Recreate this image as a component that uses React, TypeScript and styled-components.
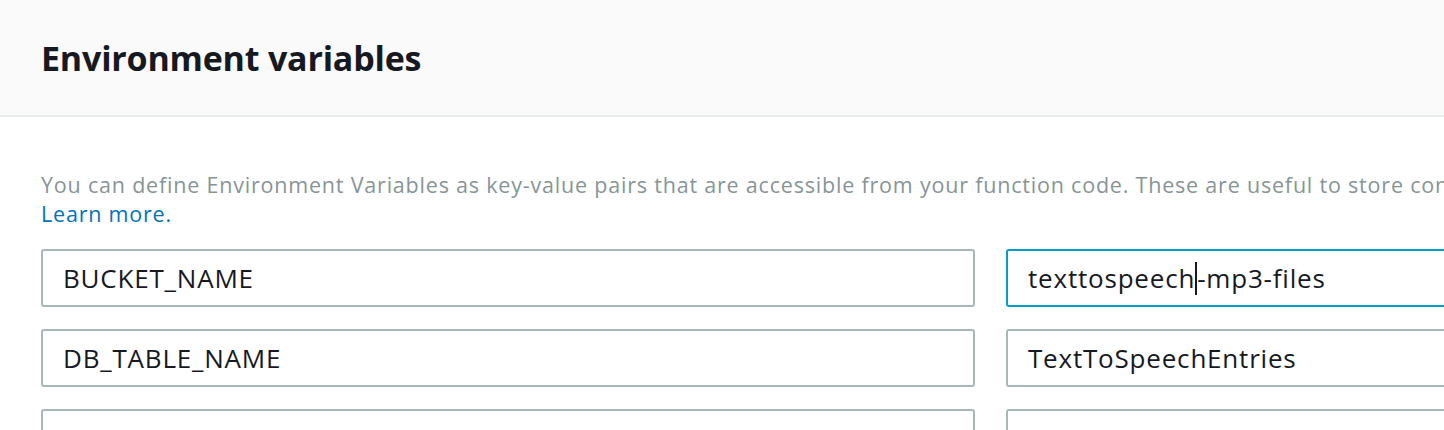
import React from 'react';
import styled, {createGlobalStyle} from 'styled-components';

const colors = {
    headerBackground: '#fafafa',
    divider: '#eaeded',
    text: '#16191f',
    muted: '#879596',
    link: '#0073bb',
    inputBorder: '#aab7b8',
    focus: '#00a1c9',
};

const GlobalStyle = createGlobalStyle`
  html, body {
    margin: 0;
    padding: 0;
    background: #fff;
    overflow: hidden;
  }
  body {
    font-family: "Open Sans", "Noto Sans", sans-serif;
    color: ${colors.text};
  }
`;

interface EnvVar {
    key: string
    value: string
    caretAt?: number
}

const variables: EnvVar[] = [
    {key: 'BUCKET_NAME', value: 'texttospeech-mp3-files', caretAt: 12},
    {key: 'DB_TABLE_NAME', value: 'TextToSpeechEntries'},
    {key: '', value: ''},
];

const ValueText: React.FC<{value: string, caretAt?: number}> = ({value, caretAt}) => {
    if (caretAt === undefined) return <>{value}</>;
    return (
        <>
            {value.slice(0, caretAt)}
            <Caret/>
            {value.slice(caretAt)}
        </>
    );
};

export default function App() {
    return (
        <Panel>
            <GlobalStyle/>
            <Header>
                <Title>Environment variables</Title>
            </Header>
            <Body>
                <Description>
                    You can define Environment Variables as key-value pairs that are accessible from your function code. These are useful to store configuration settings without the need to change function code.
                </Description>
                <LearnMore href="#">Learn more.</LearnMore>
                <Rows>
                    {variables.map((v, i) => (
                        <Row key={i}>
                            <Field>{v.key}</Field>
                            <Field focused={v.caretAt !== undefined}>
                                <ValueText value={v.value} caretAt={v.caretAt}/>
                            </Field>
                        </Row>
                    ))}
                </Rows>
            </Body>
        </Panel>
    );
}

const Panel = styled.div`
  width: 1960px;
`;

const Header = styled.div`
  background-color: ${colors.headerBackground};
  border-bottom: 2px solid ${colors.divider};
  height: 115px;
  display: flex;
  align-items: center;
  padding: 0 41px;
`;

const Title = styled.h2`
  margin: 0;
  font-size: 34px;
  font-weight: 700;
  letter-spacing: -0.2px;
  color: ${colors.text};
`;

const Body = styled.div`
  padding: 53px 0 0 41px;
  display: flex;
  flex-direction: column;
`;

const Description = styled.p`
  margin: 0;
  font-size: 21.5px;
  letter-spacing: 0.8px;
  line-height: 29px;
  color: ${colors.muted};
  white-space: nowrap;
`;

const LearnMore = styled.a`
  font-size: 21.5px;
  letter-spacing: 0.8px;
  line-height: 29px;
  color: ${colors.link};
  text-decoration: none;
  align-self: flex-start;
`;

const Rows = styled.div`
  display: flex;
  flex-direction: column;
  gap: 22px;
  margin-top: 21px;
`;

const Row = styled.div`
  display: grid;
  grid-template-columns: 934px 934px;
  gap: 31px;
`;

const Field = styled.div<{focused?: boolean}>`
  box-sizing: border-box;
  height: 58px;
  display: flex;
  align-items: center;
  padding: 0 20px;
  font-size: 26px;
  letter-spacing: 0.8px;
  color: ${colors.text};
  border: ${p => p.focused ? `2px solid ${colors.focus}` : `2px solid ${colors.inputBorder}`};
  border-radius: 3px;
  background: #fff;
  white-space: pre;
`;

const Caret = styled.span`
  display: inline-block;
  width: 2px;
  height: 33px;
  background: ${colors.text};
`;
